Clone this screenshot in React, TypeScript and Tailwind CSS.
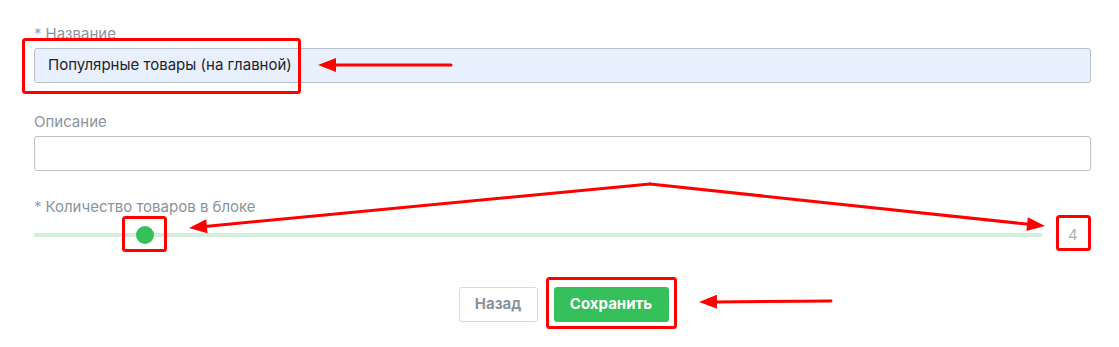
import React from "react";

type ArrowProps = { x1: number; y1: number; x2: number; y2: number };

// red annotation arrow: line from (x1,y1) to tip (x2,y2) with filled head
function Arrow({ x1, y1, x2, y2 }: ArrowProps) {
  const dx = x2 - x1;
  const dy = y2 - y1;
  const len = Math.sqrt(dx * dx + dy * dy);
  const ux = dx / len;
  const uy = dy / len;
  const headLen = 18;
  const headW = 7;
  const bx = x2 - ux * headLen;
  const by = y2 - uy * headLen;
  const px = -uy * headW;
  const py = ux * headW;
  return (
    <g>
      <line x1={x1} y1={y1} x2={bx + ux * 2} y2={by + uy * 2} stroke="#ff0000" strokeWidth={3} strokeLinecap="round" />
      <polygon points={`${x2},${y2} ${bx + px},${by + py} ${bx - px},${by - py}`} fill="#ff0000" />
    </g>
  );
}

function Field({ label, required, value, filled }: { label: string; required?: boolean; value?: string; filled?: boolean }) {
  return (
    <div>
      <div className="mb-[4px] h-5 text-[15px] leading-5 text-[#8a939d]">
        {required && <span className="mr-1 text-[#9aa2ab]">*</span>}
        {label}
      </div>
      <div
        className={
          "flex h-[35px] items-center rounded-[3px] border px-[13px] text-[15px] text-[#1d2329] " +
          (filled ? "border-[#b9c0c7] bg-[#e8f0fe]" : "border-[#bcc2c8] bg-white")
        }
      >
        {value}
      </div>
    </div>
  );
}

export default function App() {
  const count = 4;
  const pos = 11; // thumb position in percent of track

  return (
    <div className="relative h-[347px] w-[1119px] bg-white font-['Inter',_'Liberation_Sans',_sans-serif]">
      <div className="flex flex-col pl-[34px] pr-[28px] pt-[24px]">
        <Field label="Название" required value="Популярные товары (на главной)" filled />
        <div className="mt-[29px]">
          <Field label="Описание" />
        </div>

        <div className="mt-[26px] h-5 text-[15px] leading-5 text-[#8a939d]">
          <span className="mr-1 text-[#9aa2ab]">*</span>
          Количество товаров в блоке
        </div>
        <div className="mt-[8px] flex h-[20px] items-center">
          <div className="relative h-[4px] flex-1 bg-[#d1efda]">
            <div
              className="absolute top-1/2 h-[18px] w-[18px] -translate-x-1/2 -translate-y-1/2 rounded-full bg-[#35c05c]"
              style={{ left: `${pos}%` }}
            />
          </div>
          <div className="w-[49px] pl-[26px] text-[15px] text-[#a9b1ba]">{count}</div>
        </div>

        <div className="mt-[42px] flex justify-center gap-4 pl-[2px]">
          <button className="h-[35px] w-[79px] rounded-[3px] border border-[#d6dade] bg-white text-[15px] font-bold text-[#8a929b]">
            Назад
          </button>
          <button className="h-[35px] w-[115px] rounded-[3px] bg-[#35c05c] text-[15px] font-bold text-white">
            Сохранить
          </button>
        </div>
      </div>

      {/* annotation layer */}
      <svg className="pointer-events-none absolute inset-0" width={1119} height={347}>
        <rect x={23.5} y={39.5} width={276} height={53} rx={2} fill="none" stroke="#ff0000" strokeWidth={3} />
        <Arrow x1={451} y1={65} x2={318} y2={65} />
        <rect x={123.5} y={217.5} width={42} height={33} rx={2} fill="none" stroke="#ff0000" strokeWidth={3} />
        <Arrow x1={650} y1={184} x2={189} y2={228} />
        <Arrow x1={650} y1={184} x2={1045} y2={226} />
        <rect x={1057.5} y={216.5} width={32} height={33} rx={2} fill="none" stroke="#ff0000" strokeWidth={3} />
        <rect x={547.5} y={278.5} width={128} height={49} rx={2} fill="none" stroke="#ff0000" strokeWidth={3} />
        <Arrow x1={831} y1={301} x2={699} y2={302} />
      </svg>
    </div>
  );
}
